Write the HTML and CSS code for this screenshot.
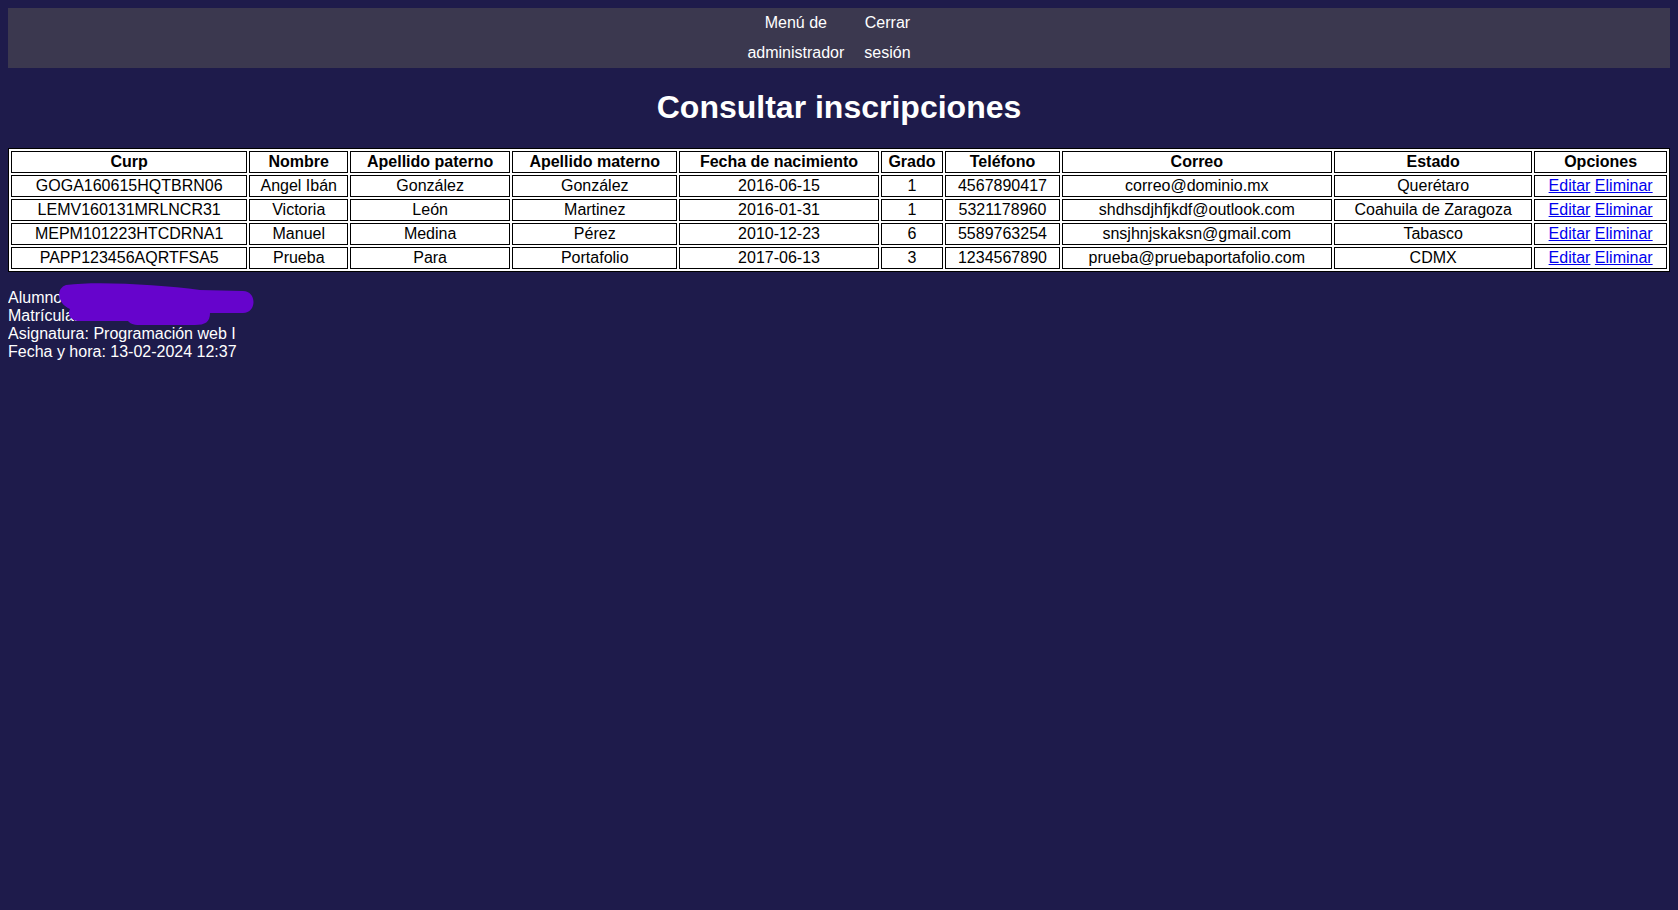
FILE: index.html
```html
<!DOCTYPE html>
<html lang="es">
<head>
<meta charset="utf-8">
<title>Consultar inscripciones</title>
<link rel="stylesheet" href="styles.css">
</head>
<body>
<nav class="topnav">
  <ul class="menu">
    <li class="menu-item"><a class="menu-link" href="#">Menú de administrador</a></li>
    <li class="menu-item"><a class="menu-link" href="#">Cerrar sesión</a></li>
  </ul>
</nav>
<h1 class="title">Consultar inscripciones</h1>
<table class="grid">
  <thead>
    <tr><th>Curp</th><th>Nombre</th><th>Apellido paterno</th><th>Apellido materno</th><th>Fecha de nacimiento</th><th>Grado</th><th>Teléfono</th><th>Correo</th><th>Estado</th><th>Opciones</th></tr>
  </thead>
  <tbody>
    <tr><td>GOGA160615HQTBRN06</td><td>Angel Ibán</td><td>González</td><td>González</td><td>2016-06-15</td><td>1</td><td>4567890417</td><td>correo@dominio.mx</td><td>Querétaro</td><td><a href="#">Editar</a> <a href="#">Eliminar</a></td></tr>
    <tr><td>LEMV160131MRLNCR31</td><td>Victoria</td><td>León</td><td>Martinez</td><td>2016-01-31</td><td>1</td><td>5321178960</td><td>shdhsdjhfjkdf@outlook.com</td><td>Coahuila de Zaragoza</td><td><a href="#">Editar</a> <a href="#">Eliminar</a></td></tr>
    <tr><td>MEPM101223HTCDRNA1</td><td>Manuel</td><td>Medina</td><td>Pérez</td><td>2010-12-23</td><td>6</td><td>5589763254</td><td>snsjhnjskaksn@gmail.com</td><td>Tabasco</td><td><a href="#">Editar</a> <a href="#">Eliminar</a></td></tr>
    <tr><td>PAPP123456AQRTFSA5</td><td>Prueba</td><td>Para</td><td>Portafolio</td><td>2017-06-13</td><td>3</td><td>1234567890</td><td>prueba@pruebaportafolio.com</td><td>CDMX</td><td><a href="#">Editar</a> <a href="#">Eliminar</a></td></tr>
  </tbody>
</table>
<footer class="info">
  <div>Alumno: Nombre del alumno</div>
  <div>Matrícula: 0000000000</div>
  <div>Asignatura: Programación web I</div>
  <div>Fecha y hora: 13-02-2024 12:37</div>
  <svg class="redact" viewBox="8 280 300 60" width="300" height="60" aria-hidden="true">
    <path d="M 66 285 C 100 281, 160 285, 200 290 L 243 291 C 257 291, 257 313, 243 313 L 210 313 C 210 322, 205 325, 195 325 L 140 325 C 132 325, 130 323, 128 321 L 80 321 C 70 321, 67 314, 70 309 C 58 304, 55 289, 66 285 Z" fill="#6604cc"/>
  </svg>
</footer>
</body>
</html>
```

FILE: styles.css
```css
html, body {
  background: #1e1b4b;
}
body {
  margin: 8px;
  font-family: "Liberation Sans", Arial, sans-serif;
  font-size: 16px;
  color: #ffffff;
}
.topnav {
  background: #3b384f;
}
.menu {
  display: flex;
  justify-content: center;
  list-style: none;
  margin: 0;
  padding: 0;
}
.menu-item {
  width: min-content;
  text-align: center;
  margin-right: 20px;
  line-height: 30px;
}
.menu-link {
  color: #ffffff;
  text-decoration: none;
}
.title {
  text-align: center;
  font-size: 32px;
  font-weight: bold;
  margin: 21.44px 0;
}
.grid {
  width: 100%;
  background: #ffffff;
  color: #000000;
  border: 1px solid #000000;
  border-spacing: 2px;
}
.grid th, .grid td {
  border: 1px solid #000000;
  padding: 1px;
  text-align: center;
}
.grid a {
  color: #0000ee;
  text-decoration: underline;
}
.info {
  position: relative;
  margin-top: 17px;
  line-height: normal;
}
.redact {
  position: absolute;
  left: 0;
  top: -9px;
}
```
